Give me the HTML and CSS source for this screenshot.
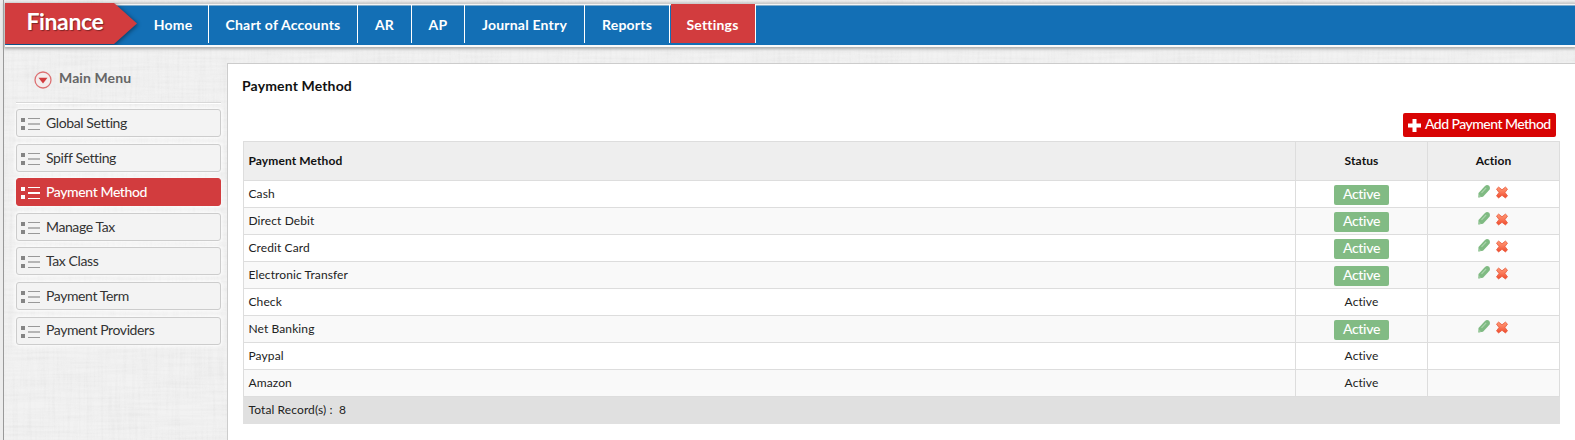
FILE: index.html
```html
<!DOCTYPE html>
<html lang="en">
<head>
<meta charset="utf-8">
<title>Finance - Payment Method</title>
<link rel="stylesheet" href="styles.css">
</head>
<body>
<svg class="defs" width="0" height="0" aria-hidden="true">
  <defs>
    <linearGradient id="redfill" x1="0" y1="0" x2="0" y2="1"><stop offset="0" stop-color="#ff9a74"/><stop offset=".5" stop-color="#fa7656"/><stop offset="1" stop-color="#ee4a2b"/></linearGradient>
    <symbol id="list" viewBox="0 0 19 13">
      <path class="sq" d="M0 0h4v4H0zM0 8h4v4H0z"/>
      <path class="ln" d="M7 .5h12M7 11.500h12"/><path class="ln mid" d="M7 6h12"/>
    </symbol>
    <symbol id="pencil" viewBox="0 0 12 13">
      <path d="M.3 12.500.5 8 7 1Q9-.7 11.100.8 12.500 2.500 11.500 4.800L5 11.700Z" fill="#7fba82"/>
      <path d="M3.500 7.800 8.200 2.900" stroke="#abd4ad" stroke-width="1.200"/>
      <path d="M1.200 9.600 3.100 11.700.6 12.500Z" fill="#9ac89c"/>
    </symbol>
    <symbol id="cross" viewBox="0 0 12 12">
      <path d="M2.6.6 6 3.3 9.4.6 11.5 2.6 9 6l2.5 3.4-2.1 2L6 8.8 2.6 11.4.5 9.4 3 6 .5 2.6Z" fill="url(#redfill)" stroke="#e8573b" stroke-width=".8" stroke-linejoin="round"/>
    </symbol>
  </defs>
</svg>
<div class="page">
  <header class="topbar">
    <div class="brand">
      <svg class="brand-shape" width="136" height="44" viewBox="0 0 136 44"><path d="M0 0H109L132 20.5 109 41H0Z" fill="#d23c3e"/></svg>
      <span class="brand-name">Finance</span>
    </div>
    <nav class="nav">
      <a class="n-home">Home</a><a class="n-chart">Chart of Accounts</a><a class="n-ar">AR</a><a class="n-ap">AP</a><a class="n-journal">Journal Entry</a><a class="n-reports">Reports</a><a class="n-settings active">Settings</a>
    </nav>
  </header>
  <div class="content">
    <aside class="sidebar">
      <h2 class="menu-title">
        <svg width="18" height="18" viewBox="0 0 18 18"><circle cx="9" cy="9" r="8" fill="#f3eded" stroke="#dc7072" stroke-width="1.3"/><path d="M4.5 6.8h9L9 12.4Z" fill="#d23c3e"/></svg>
        <span>Main Menu</span>
      </h2>
      <ul class="menu">
        <li><svg><use href="#list"/></svg><span>Global Setting</span></li>
        <li><svg><use href="#list"/></svg><span>Spiff Setting</span></li>
        <li class="current"><svg><use href="#list"/></svg><span>Payment Method</span></li>
        <li><svg><use href="#list"/></svg><span>Manage Tax</span></li>
        <li><svg><use href="#list"/></svg><span>Tax Class</span></li>
        <li><svg><use href="#list"/></svg><span>Payment Term</span></li>
        <li><svg><use href="#list"/></svg><span>Payment Providers</span></li>
      </ul>
    </aside>
    <main class="panel">
      <h1>Payment Method</h1>
      <div class="actions"><a class="add"><svg width="13" height="13" viewBox="0 0 13 13"><path d="M4.5 0h4v4.500H13v4H8.500V13h-4V8.500H0v-4h4.500z" fill="#fff"/></svg><span>Add Payment Method</span></a></div>
      <table class="grid">
        <colgroup><col><col class="c-side"><col class="c-side"></colgroup>
        <thead><tr><th>Payment Method</th><th>Status</th><th>Action</th></tr></thead>
        <tbody>
          <tr><td>Cash</td><td><span class="badge">Active</span></td><td><span class="tools"><svg class="edit"><use href="#pencil"/></svg><svg><use href="#cross"/></svg></span></td></tr>
          <tr><td>Direct Debit</td><td><span class="badge">Active</span></td><td><span class="tools"><svg class="edit"><use href="#pencil"/></svg><svg><use href="#cross"/></svg></span></td></tr>
          <tr><td>Credit Card</td><td><span class="badge">Active</span></td><td><span class="tools"><svg class="edit"><use href="#pencil"/></svg><svg><use href="#cross"/></svg></span></td></tr>
          <tr><td>Electronic Transfer</td><td><span class="badge">Active</span></td><td><span class="tools"><svg class="edit"><use href="#pencil"/></svg><svg><use href="#cross"/></svg></span></td></tr>
          <tr><td>Check</td><td>Active</td><td></td></tr>
          <tr><td>Net Banking</td><td><span class="badge">Active</span></td><td><span class="tools"><svg class="edit"><use href="#pencil"/></svg><svg><use href="#cross"/></svg></span></td></tr>
          <tr><td>Paypal</td><td>Active</td><td></td></tr>
          <tr><td>Amazon</td><td>Active</td><td></td></tr>
        </tbody>
        <tfoot><tr><td colspan="3">Total Record(s) :&nbsp; 8</td></tr></tfoot>
      </table>
    </main>
  </div>
</div>
</body>
</html>
```
FILE: styles.css
```css
* { box-sizing: border-box; }
html, body { height: 100%; }
body { margin: 0; overflow: hidden; background: #ececec; font-family: Lato, "Liberation Sans", sans-serif; font-variant-ligatures: none; color: #222; }
.defs { position: absolute; }
.page {
  display: flex; flex-direction: column; height: 440px; margin-left: 3px; border-left: 1px solid #999; padding: 3px 0 0 1px;
  background: #f2f2f2 url("data:image/svg+xml,%3Csvg xmlns='http://www.w3.org/2000/svg' width='400' height='440'%3E%3Cfilter id='a' x='0' y='0' width='1' height='1'%3E%3CfeTurbulence type='fractalNoise' baseFrequency='.02 .35' numOctaves='2' stitchTiles='stitch'/%3E%3CfeColorMatrix values='0 0 0 0 .4 0 0 0 0 .4 0 0 0 0 .4 .16 0 0 0 -.055'/%3E%3C/filter%3E%3Cfilter id='b' x='0' y='0' width='1' height='1'%3E%3CfeTurbulence type='fractalNoise' baseFrequency='.35 .02' numOctaves='2' stitchTiles='stitch'/%3E%3CfeColorMatrix values='0 0 0 0 .4 0 0 0 0 .4 0 0 0 0 .4 .16 0 0 0 -.065'/%3E%3C/filter%3E%3Crect width='400' height='440' filter='url(%23a)'/%3E%3Crect width='400' height='440' filter='url(%23b)'/%3E%3C/svg%3E");
}
.topbar { display: flex; flex: none; height: 44px; background: #136fb5; border-top: 1px solid #ccc; border-bottom: 2px solid #fafafa; box-shadow: inset 0 1px #f4f4f4, inset 0 2px #7fabca, 0 1px 3px 1px #aaa; }
.brand { flex: none; width: 133px; margin-top: -1px; display: grid; }
.brand > * { grid-area: 1 / 1; }
.brand-shape { overflow: visible; filter: drop-shadow(1px 1px 2px rgba(0,0,0,.45)); clip-path: inset(0 -4px 2px 0); }
.brand-name { z-index: 1; padding-left: 21.5px; font-size: 23px; letter-spacing: -.4px; line-height: 36px; font-weight: 700; color: #fff; text-shadow: 1px 1px 1px rgba(0,0,0,.4); }
.nav { display: flex; }
.nav a { margin-top: 1px; height: 38px; border-right: 1px solid #fff; text-align: center; font-size: 14px; letter-spacing: .2px; line-height: 39px; font-weight: 700; color: #fff; }
.n-home { width: 71px; }
.n-chart { width: 149px; }
.n-ar { width: 54px; }
.n-ap { width: 53px; }
.n-journal { width: 120px; }
.n-reports { width: 85px; }
.nav .n-settings { width: 86px; height: 39px; margin-top: 0; line-height: 41px; background: linear-gradient(#d23c3e, #d23c3e) 1px 0 no-repeat; }
.content { display: flex; flex: 1; min-height: 0; }
.sidebar { width: 222px; flex: none; padding: 22px 6px 0 11px; }
.menu-title { display: flex; gap: 7.5px; margin: 0; height: 34px; padding: 2px 0 0 17.5px; border-bottom: 1px solid #d8d8d8; box-shadow: 0 1px #fff; font-size: 14px; letter-spacing: .1px; line-height: 18px; font-weight: 700; color: #666; }
.menu-title span { margin-top: -2px; }
.menu { list-style: none; margin: 6px 0 0; padding: 0; display: flex; flex-direction: column; gap: 6.6px; }
.menu li { display: flex; align-items: center; height: 28px; padding-left: 4px; gap: 6px; border: 1px solid #ccc; border-radius: 3px; background: #f3f3f3; box-shadow: 0 0 4px 1px #fff; font-size: 14px; letter-spacing: -.4px; line-height: 26px; color: #333; }
.menu li svg { width: 19px; height: 13px; margin-top: 3px; }
.menu li span { margin-top: -.2px; }
.sq { fill: #858585; }
.ln { stroke: #999; }
.mid { stroke: #b5b5b5; stroke-width: 2; }
.menu .current { background: #d23c3e; border-color: #d23c3e; color: #fff; font-weight: 500; }
.current svg { filter: brightness(1.9); }
.current .mid { opacity: .5; }
.panel { flex: 1; background: #fff; margin-top: 16px; border: solid #ccc; border-width: 1px 0 0 1px; padding: 0 15px 0 15px; }
.panel h1 { margin: 12px 0 0 -1px; height: 20px; font-size: 14px; letter-spacing: .15px; line-height: 19px; font-weight: 700; color: #111; }
.actions { display: flex; justify-content: flex-end; padding: 17px 4px 0 0; height: 45px; }
.add { display: flex; align-items: center; gap: 4px; width: 153px; height: 24px; padding-left: 5px; border-radius: 2px; background: #d80404; color: #fff; font-size: 14px; font-weight: 500; letter-spacing: -.53px; line-height: 22px; white-space: nowrap; }
.add svg { flex: none; margin-top: 1px; }
.add span { margin-top: -2px; }
.grid { width: 1317px; border-collapse: collapse; table-layout: fixed; font-size: 12px; letter-spacing: .1px; line-height: 16px; color: #222; }
.c-side { width: 132px; }
.grid th, .grid td { border: 1px solid #ddd; padding: 0 5px; text-align: center; }
.grid th { height: 39px; background: #eee; font-weight: 700; color: #111; }
.grid td { height: 27px; }
.grid th:first-child, .grid td:first-child { text-align: left; padding-left: 4.5px; }
.grid tbody tr:nth-child(even) { background: #f9f9f9; }
.grid tfoot td { height: 27px; background: #e0e0e0; border-color: #e0e0e0; }
.badge { display: block; width: 55px; height: 20px; margin: 2px auto 0; border-radius: 2px; background: #82bb84; color: #fff; font-size: 14px; font-weight: 500; letter-spacing: -.3px; line-height: 18px; }
.tools { display: flex; justify-content: center; gap: 6px; margin-top: -4px; padding-right: 1px; }
.tools svg { width: 12px; height: 13px; }
.tools .edit { margin-top: -.5px; }
```
